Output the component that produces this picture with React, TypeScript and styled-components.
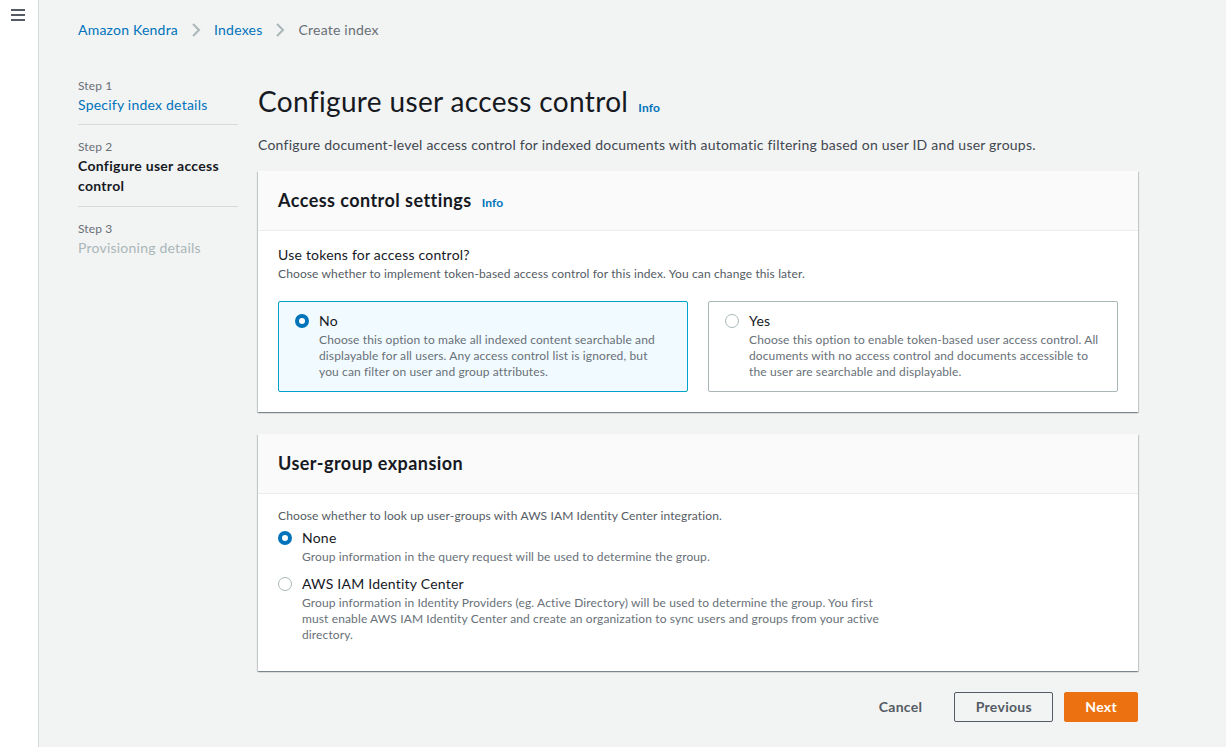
import React from "react";
import styled, { createGlobalStyle } from "styled-components";

const GlobalStyle = createGlobalStyle`
    html, body {
        margin: 0;
        padding: 0;
        background: #f2f3f3;
        font-family: Lato, "Open Sans", Arial, sans-serif;
        color: #16191f;
        letter-spacing: 0.22px;
    }
    * {
        box-sizing: border-box;
    }
`;

const PageCSS = styled.div`
    display: flex;
    min-height: 747px;
`;

const SideRailCSS = styled.div`
    width: 39px;
    flex-shrink: 0;
    background: #fff;
    border-right: 1px solid #d5dbdb;
    padding: 9px 0 0 11px;
`;

const HamburgerCSS = styled.div`
    display: flex;
    flex-direction: column;
    gap: 3px;
    width: 14px;

    span {
        display: block;
        height: 2px;
        background: #545b64;
    }
`;

const MainCSS = styled.div`
    flex: 1;
    padding: 0 88px 0 39px;
`;

const BreadcrumbsCSS = styled.nav`
    display: flex;
    align-items: center;
    height: 59px;
    font-size: 14px;
`;

const CrumbLink = styled.a`
    color: #0073bb;
    text-decoration: none;
`;

const CrumbCurrent = styled.span`
    color: #687078;
`;

const CrumbSep = styled.span`
    display: flex;
    align-items: center;
    margin: 0 10px;
`;

const LayoutCSS = styled.div`
    display: grid;
    grid-template-columns: 160px 1fr;
    column-gap: 20px;
`;

const StepsCSS = styled.ol`
    list-style: none;
    margin: 19px 0 0;
    padding: 0;
`;

const StepItem = styled.li<{ $last?: boolean }>`
    padding: ${({ $last }) => ($last ? "14px 0 0" : "14px 0 10px")};
    border-bottom: ${({ $last }) => ($last ? "none" : "1px solid #d5dbdb")};

    &:first-child {
        padding-top: 0;
        padding-bottom: 9px;
    }
`;

const StepNumber = styled.div`
    font-size: 12px;
    line-height: 16px;
    letter-spacing: 0.12px;
    color: #687078;
    margin-bottom: 1px;
`;

const StepTitle = styled.div<{ $state: "done" | "active" | "todo" }>`
    font-size: 14px;
    line-height: 20px;
    font-weight: ${({ $state }) => ($state === "active" ? 700 : 400)};
    letter-spacing: ${({ $state }) => ($state === "active" ? "0.3px" : "0.22px")};
    color: ${({ $state }) =>
        $state === "done" ? "#0073bb" : $state === "active" ? "#16191f" : "#aab7b8"};
`;

const ContentCSS = styled.div`
    padding-top: 24px;
`;

const PageHeader = styled.h1`
    display: flex;
    align-items: baseline;
    gap: 10px;
    margin: 0;
    font-size: 28px;
    line-height: 36px;
    font-weight: 400;
    letter-spacing: 0.35px;
`;

const InfoLink = styled.a`
    font-size: 12px;
    font-weight: 700;
    letter-spacing: 0.1px;
    color: #0073bb;
    text-decoration: none;
`;

const PageDescription = styled.p`
    margin: 8px 0 15px;
    font-size: 14px;
    line-height: 22px;
    color: #414750;
`;

const CardCSS = styled.section`
    background: #fff;
    box-shadow: 0 1px 1px 0 rgba(0, 28, 36, 0.3),
        1px 1px 1px 0 rgba(0, 28, 36, 0.15),
        -1px 1px 1px 0 rgba(0, 28, 36, 0.15);
    margin-bottom: 22px;
`;

const CardHeader = styled.header`
    display: flex;
    align-items: baseline;
    gap: 10px;
    padding: 18px 20px 19px;
    background: #fafafa;
    border-bottom: 1px solid #eaeded;
`;

const CardTitle = styled.h2`
    margin: 0;
    font-size: 18px;
    line-height: 22px;
    font-weight: 700;
    letter-spacing: 0.45px;
`;

const CardBody = styled.div<{ $pt?: number; $pb?: number }>`
    padding: ${({ $pt = 13, $pb = 20 }) => `${$pt}px 20px ${$pb}px`};
`;

const FieldLabel = styled.div`
    font-size: 14px;
    line-height: 22px;
`;

const FieldHint = styled.div`
    font-size: 12px;
    line-height: 16px;
    letter-spacing: 0.12px;
    color: #545b64;
`;

const TilesCSS = styled.div`
    display: grid;
    grid-template-columns: 1fr 1fr;
    gap: 20px;
    margin-top: 19px;
`;

const TileCSS = styled.label<{ $checked?: boolean }>`
    display: flex;
    align-items: flex-start;
    gap: 10px;
    padding: 8px 12px 11px 16px;
    border: 1px solid ${({ $checked }) => ($checked ? "#00a1c9" : "#aab7b8")};
    border-radius: 2px;
    background: ${({ $checked }) => ($checked ? "#f1faff" : "#fff")};
`;

const RadioCircle = styled.span<{ $checked?: boolean }>`
    flex-shrink: 0;
    width: 14px;
    height: 14px;
    margin-top: 4px;
    border-radius: 50%;
    background: #fff;
    border: ${({ $checked }) => ($checked ? "4px solid #0073bb" : "1px solid #aab7b8")};
`;

const OptionText = styled.div<{ $maxWidth?: number }>`
    max-width: ${({ $maxWidth }) => ($maxWidth ? `${$maxWidth}px` : "none")};
`;

const OptionHint = styled(FieldHint)`
    color: #687078;
    white-space: pre-line;
`;

const RadioGroupCSS = styled.div`
    display: flex;
    flex-direction: column;
    gap: 8px;
    margin-top: 3px;
`;

const RadioRow = styled.label`
    display: flex;
    align-items: flex-start;
    gap: 10px;
`;

const ActionsCSS = styled.div`
    display: flex;
    justify-content: flex-end;
    align-items: center;
    gap: 11px;
    margin-top: -1px;
`;

const ButtonCSS = styled.button<{ $variant: "link" | "normal" | "primary" }>`
    font-family: inherit;
    font-size: 14px;
    font-weight: 700;
    line-height: 20px;
    letter-spacing: 0.3px;
    height: 30px;
    border-radius: 2px;
    cursor: pointer;
    padding: 4px 20px;
    border: 1px solid
        ${({ $variant }) =>
            $variant === "normal" ? "#545b64" : $variant === "primary" ? "#ec7211" : "transparent"};
    background: ${({ $variant }) => ($variant === "primary" ? "#ec7211" : "transparent")};
    color: ${({ $variant }) => ($variant === "primary" ? "#fff" : "#545b64")};
    min-width: ${({ $variant }) => ($variant === "normal" ? "99px" : "auto")};
`;

const Chevron = () => (
    <svg width="16" height="16" viewBox="0 0 16 16" fill="none">
        <path d="M5 2l6 6-6 6" stroke="#aab7b8" strokeWidth="2" />
    </svg>
);

const tokenOptions = [
    {
        value: "no",
        label: "No",
        hint: "Choose this option to make all indexed content searchable and\ndisplayable for all users. Any access control list is ignored, but\nyou can filter on user and group attributes.",
    },
    {
        value: "yes",
        label: "Yes",
        hint: "Choose this option to enable token-based user access control. All\ndocuments with no access control and documents accessible to\nthe user are searchable and displayable.",
    },
];

const expansionOptions = [
    {
        value: "none",
        label: "None",
        hint: "Group information in the query request will be used to determine the group.",
    },
    {
        value: "sso",
        label: "AWS IAM Identity Center",
        hint: "Group information in Identity Providers (eg. Active Directory) will be used to determine the group. You first must enable AWS IAM Identity Center and create an organization to sync users and groups from your active directory.",
    },
];

const App: React.FC = () => {
    const tokens = "no";
    const expansion = "none";

    return (
        <>
            <GlobalStyle />
            <PageCSS>
                <SideRailCSS>
                    <HamburgerCSS>
                        <span />
                        <span />
                        <span />
                    </HamburgerCSS>
                </SideRailCSS>
                <MainCSS>
                    <BreadcrumbsCSS>
                        <CrumbLink href="#">Amazon Kendra</CrumbLink>
                        <CrumbSep>
                            <Chevron />
                        </CrumbSep>
                        <CrumbLink href="#">Indexes</CrumbLink>
                        <CrumbSep>
                            <Chevron />
                        </CrumbSep>
                        <CrumbCurrent>Create index</CrumbCurrent>
                    </BreadcrumbsCSS>
                    <LayoutCSS>
                        <StepsCSS>
                            <StepItem>
                                <StepNumber>Step 1</StepNumber>
                                <StepTitle $state="done">Specify index details</StepTitle>
                            </StepItem>
                            <StepItem>
                                <StepNumber>Step 2</StepNumber>
                                <StepTitle $state="active">Configure user access control</StepTitle>
                            </StepItem>
                            <StepItem $last>
                                <StepNumber>Step 3</StepNumber>
                                <StepTitle $state="todo">Provisioning details</StepTitle>
                            </StepItem>
                        </StepsCSS>
                        <ContentCSS>
                            <PageHeader>
                                Configure user access control
                                <InfoLink href="#">Info</InfoLink>
                            </PageHeader>
                            <PageDescription>
                                Configure document-level access control for indexed documents with
                                automatic filtering based on user ID and user groups.
                            </PageDescription>

                            <CardCSS>
                                <CardHeader>
                                    <CardTitle>Access control settings</CardTitle>
                                    <InfoLink href="#">Info</InfoLink>
                                </CardHeader>
                                <CardBody>
                                    <FieldLabel>Use tokens for access control?</FieldLabel>
                                    <FieldHint>
                                        Choose whether to implement token-based access control for
                                        this index. You can change this later.
                                    </FieldHint>
                                    <TilesCSS>
                                        {tokenOptions.map((opt) => (
                                            <TileCSS key={opt.value} $checked={opt.value === tokens}>
                                                <RadioCircle $checked={opt.value === tokens} />
                                                <OptionText>
                                                    <FieldLabel>{opt.label}</FieldLabel>
                                                    <OptionHint>{opt.hint}</OptionHint>
                                                </OptionText>
                                            </TileCSS>
                                        ))}
                                    </TilesCSS>
                                </CardBody>
                            </CardCSS>

                            <CardCSS>
                                <CardHeader>
                                    <CardTitle>User-group expansion</CardTitle>
                                </CardHeader>
                                <CardBody $pt={14} $pb={28}>
                                    <FieldHint>
                                        Choose whether to look up user-groups with AWS IAM Identity
                                        Center integration.
                                    </FieldHint>
                                    <RadioGroupCSS>
                                        {expansionOptions.map((opt) => (
                                            <RadioRow key={opt.value}>
                                                <RadioCircle $checked={opt.value === expansion} />
                                                <OptionText $maxWidth={586}>
                                                    <FieldLabel>{opt.label}</FieldLabel>
                                                    <OptionHint>{opt.hint}</OptionHint>
                                                </OptionText>
                                            </RadioRow>
                                        ))}
                                    </RadioGroupCSS>
                                </CardBody>
                            </CardCSS>

                            <ActionsCSS>
                                <ButtonCSS $variant="link">Cancel</ButtonCSS>
                                <ButtonCSS $variant="normal">Previous</ButtonCSS>
                                <ButtonCSS $variant="primary">Next</ButtonCSS>
                            </ActionsCSS>
                        </ContentCSS>
                    </LayoutCSS>
                </MainCSS>
            </PageCSS>
        </>
    );
};

export default App;
